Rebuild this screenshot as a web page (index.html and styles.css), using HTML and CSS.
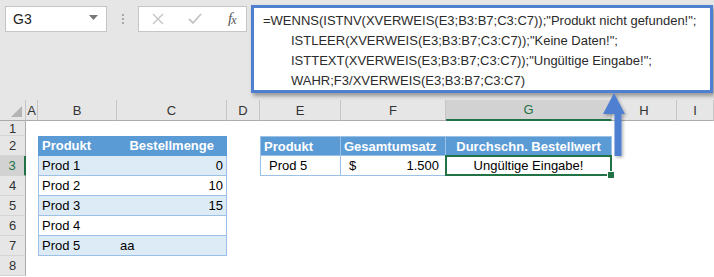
FILE: index.html
```html
<!DOCTYPE html>
<html lang="de">
<head>
<meta charset="utf-8">
<link rel="stylesheet" href="styles.css">
</head>
<body>
<div class="app">
  <div class="topbar">
    <div class="namebox"><span>G3</span><svg class="dd" width="9" height="5" viewBox="0 0 9 5"><path d="M0 0H9L4.5 5Z" fill="#777"/></svg></div>
    <div class="dots"><i></i><i></i><i></i></div>
    <div class="fbtns">
      <svg width="12" height="12" viewBox="0 0 12 12"><path d="M1 1L11 11M11 1L1 11" stroke="#c4c4c4" stroke-width="1.4"/></svg>
      <svg width="14" height="12" viewBox="0 0 14 12"><path d="M1 6L5 10L13 1" stroke="#c4c4c4" stroke-width="1.8" fill="none"/></svg>
      <span class="fx">f<sub>x</sub></span>
    </div>
    <div class="formula">
      <div class="fl">=WENNS(ISTNV(XVERWEIS(E3;B3:B7;C3:C7));"Produkt nicht gefunden!";</div>
      <div class="fl ind">ISTLEER(XVERWEIS(E3;B3:B7;C3:C7));"Keine Daten!";</div>
      <div class="fl ind">ISTTEXT(XVERWEIS(E3;B3:B7;C3:C7));"Ungültige Eingabe!";</div>
      <div class="fl ind">WAHR;F3/XVERWEIS(E3;B3:B7;C3:C7)</div>
    </div>
  </div>

  <div class="grid">
    <div class="ch corner"></div>
    <div class="ch">A</div><div class="ch">B</div><div class="ch">C</div><div class="ch">D</div><div class="ch">E</div><div class="ch">F</div><div class="ch sel">G</div><div class="ch">H</div><div class="ch">I</div>

    <div class="rh">1</div>
    <div class="c"></div><div class="c"></div><div class="c"></div><div class="c"></div><div class="c"></div><div class="c"></div><div class="c"></div><div class="c"></div><div class="c"></div>

    <div class="rh">2</div>
    <div class="c"></div>
    <div class="c th tl">Produkt</div>
    <div class="c th tr r hdr-r">Bestellmenge</div>
    <div class="c"></div>
    <div class="c th2 first">Produkt</div>
    <div class="c th2">Gesamtumsatz</div>
    <div class="c th2 last ctr">Durchschn. Bestellwert</div>
    <div class="c"></div><div class="c"></div>

    <div class="rh rsel">3</div>
    <div class="c"></div>
    <div class="c ta tl">Prod 1</div>
    <div class="c ta tr r">0</div>
    <div class="c"></div>
    <div class="c td first ind2">Prod 5</div>
    <div class="c td money"><span>$</span><span>1.500</span></div>
    <div class="c td last ctr active">Ungültige Eingabe!</div>
    <div class="c"></div><div class="c"></div>

    <div class="rh">4</div>
    <div class="c"></div>
    <div class="c tw tl">Prod 2</div>
    <div class="c tw tr r">10</div>
    <div class="c"></div><div class="c"></div><div class="c"></div><div class="c"></div><div class="c"></div><div class="c"></div>

    <div class="rh">5</div>
    <div class="c"></div>
    <div class="c ta tl">Prod 3</div>
    <div class="c ta tr r">15</div>
    <div class="c"></div><div class="c"></div><div class="c"></div><div class="c"></div><div class="c"></div><div class="c"></div>

    <div class="rh">6</div>
    <div class="c"></div>
    <div class="c tw tl">Prod 4</div>
    <div class="c tw tr"></div>
    <div class="c"></div><div class="c"></div><div class="c"></div><div class="c"></div><div class="c"></div><div class="c"></div>

    <div class="rh">7</div>
    <div class="c"></div>
    <div class="c ta tl">Prod 5</div>
    <div class="c ta tr">aa</div>
    <div class="c"></div><div class="c"></div><div class="c"></div><div class="c"></div><div class="c"></div><div class="c"></div>

    <div class="rh">8</div>
    <div class="c"></div><div class="c"></div><div class="c"></div><div class="c"></div><div class="c"></div><div class="c"></div><div class="c"></div><div class="c"></div><div class="c"></div>
  </div>

  <svg class="arrow" width="30" height="70" viewBox="0 0 30 70">
    <defs><filter id="sh" x="-50%" y="-20%" width="200%" height="150%"><feDropShadow dx="1.5" dy="1.5" stdDeviation="1.5" flood-color="#000" flood-opacity="0.3"/></filter></defs>
    <path d="M11 0L22 21H18.5V63H11.5V21H0Z" fill="#4f7fd0" filter="url(#sh)" transform="translate(3,0)"/>
  </svg>
</div>
</body>
</html>
```
FILE: styles.css
```css
* { box-sizing: border-box; }
html, body { margin: 0; padding: 0; }
body {
  width: 714px;
  height: 277px;
  overflow: hidden;
  background: #ffffff;
  font-family: "Liberation Sans", Arial, sans-serif;
  color: #000;
}
.app { position: relative; width: 714px; height: 277px; }

.topbar {
  display: flex;
  align-items: flex-start;
  height: 100px;
  background: #e6e6e6;
  padding: 6px 0 0 5px;
}
.namebox {
  width: 102px;
  height: 26px;
  background: #fff;
  border: 1px solid #c6c6c6;
  display: flex;
  align-items: center;
  justify-content: space-between;
  padding: 0 8px 0 7px;
  font-size: 14px;
  color: #222;
}
.namebox .dd { margin-top: -3px; }
.dots {
  width: 31px;
  height: 26px;
  display: flex;
  flex-direction: column;
  align-items: center;
  justify-content: center;
  gap: 2px;
}
.dots i { display: block; width: 2px; height: 2px; background: #a8a8a8; }
.fbtns {
  width: 109px;
  height: 26px;
  background: #fff;
  border: 1px solid #c6c6c6;
  display: flex;
  align-items: center;
  padding: 0 0 0 13px;
  gap: 24px;
}
.fx {
  font-family: "Liberation Serif", serif;
  font-style: italic;
  font-size: 15px;
  color: #555;
  margin-left: 2px;
}
.fx sub { font-size: 12px; vertical-align: -1px; margin-left: -1px; }

.formula {
  margin-left: 4px;
  margin-top: -1px;
  width: 462px;
  height: 88px;
  background: #fff;
  border: 3px solid #4f7fd0;
  box-shadow: 2px 3px 4px rgba(0,0,0,0.35);
  padding: 3px 0 0 9px;
  font-size: 13px;
  color: #2b2b2b;
}
.fl { height: 20px; line-height: 20px; white-space: nowrap; }
.fl.ind { padding-left: 28px; }

.grid {
  display: grid;
  grid-template-columns: 26px 12px 79px 110px 33px 81px 105px 166px 65px 37px;
  grid-template-rows: 21px 15px repeat(7, 20px);
  font-size: 13px;
}
.ch {
  background: #e6e6e6;
  border-right: 1px solid #c6c6c6;
  border-bottom: 1px solid #ababab;
  display: flex;
  align-items: center;
  justify-content: center;
  color: #333;
  font-size: 13px;
}
.ch.sel {
  background: #d2d2d2;
  color: #217346;
  border-bottom: 2px solid #217346;
}
.corner { position: relative; }
.corner::after {
  content: "";
  position: absolute;
  right: 3px;
  bottom: 3px;
  border-style: solid;
  border-width: 0 0 11px 11px;
  border-color: transparent transparent #b4b4b4 transparent;
}
.rh {
  background: #e6e6e6;
  border-right: 1px solid #ababab;
  border-bottom: 1px solid #d4d4d4;
  display: flex;
  align-items: center;
  justify-content: center;
  color: #333;
  font-size: 13px;
}
.rh.rsel {
  background: #d2d2d2;
  color: #217346;
  border-right: 2px solid #217346;
}
.c {
  background: #fff;
  display: flex;
  align-items: center;
  white-space: nowrap;
  padding: 0 3px;
}
.r { justify-content: flex-end; }
.ctr { justify-content: center; }
.th {
  background: #5b9bd5;
  color: #fff;
  font-weight: bold;
  border-bottom: 1px solid #9bc2e6;
}
.hdr-r { padding-right: 12px; }
.ta { background: #ddebf7; border-bottom: 1px solid #9bc2e6; }
.tw { background: #fff; border-bottom: 1px solid #9bc2e6; }
.tl { border-left: 1px solid #9bc2e6; }
.tr { border-right: 1px solid #9bc2e6; }
.th.tl, .th.tr { border-color: #5b9bd5; }

.th2 {
  background: #5b9bd5;
  color: #fff;
  font-weight: bold;
  border-top: 1px solid #9bc2e6;
  border-right: 1px solid #9bc2e6;
  border-bottom: 1px solid #9bc2e6;
}
.th2.first { border-left: 1px solid #9bc2e6; }
.td {
  border-right: 1px solid #9bc2e6;
  border-bottom: 1px solid #9bc2e6;
}
.td.first { border-left: 1px solid #9bc2e6; }
.ind2 { padding-left: 8px; }
.money { justify-content: space-between; padding: 0 6px 0 8px; }
.active { position: relative; }
.active::after {
  content: "";
  position: absolute;
  left: -1px;
  top: -1px;
  right: -1px;
  bottom: -1px;
  border: 2px solid #217346;
}
.active::before {
  content: "";
  position: absolute;
  right: -4px;
  bottom: -4px;
  width: 6px;
  height: 6px;
  background: #217346;
  border: 1px solid #fff;
  z-index: 1;
}

.arrow {
  position: absolute;
  left: 600px;
  top: 93px;
}
```
